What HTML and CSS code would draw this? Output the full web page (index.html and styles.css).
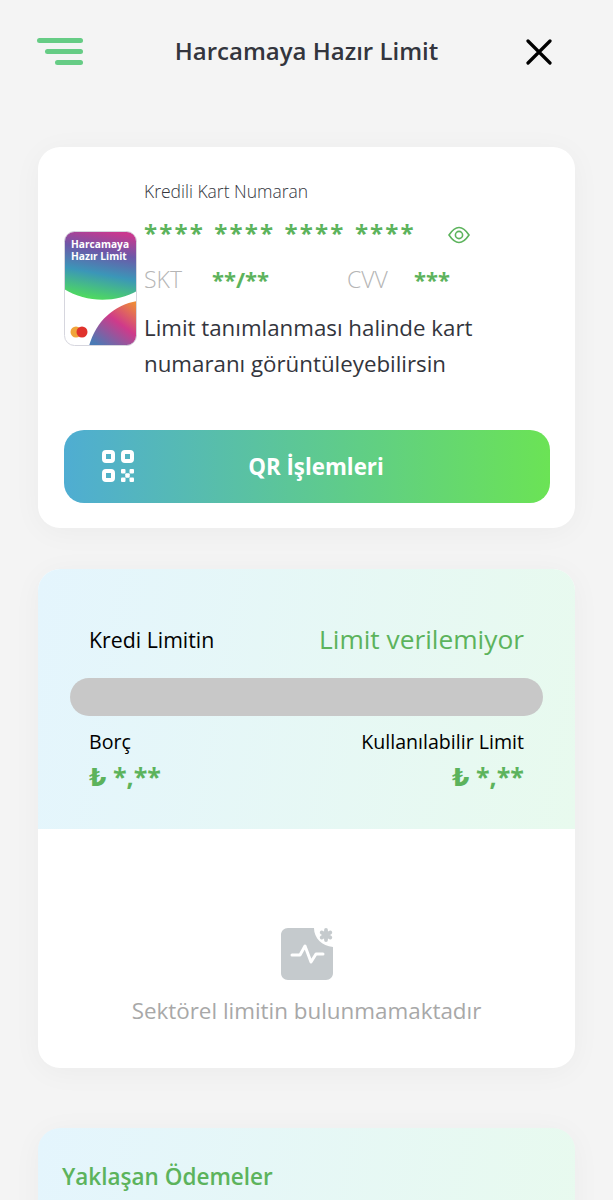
FILE: index.html
```html
<!DOCTYPE html>
<html lang="tr">

<head>
    <meta charset="UTF-8">
    <meta name="viewport" content="width=device-width, initial-scale=1.0">
    <title>Harcamaya Hazır Limit</title>
    <link rel="stylesheet" href="styles.css">
</head>

<body>
    <div class="page">

        <!-- Top bar -->
        <header class="top-bar">
            <svg class="menu-icon" width="46" height="27" viewBox="0 0 46 27">
                <rect x="0" y="0" width="46" height="5" rx="2.5" fill="#66cc85" />
                <rect x="8" y="11" width="38" height="5" rx="2.5" fill="#66cc85" />
                <rect x="18" y="22" width="28" height="5" rx="2.5" fill="#66cc85" />
            </svg>
            <h1 class="top-title">Harcamaya Hazır Limit</h1>
            <svg class="close-icon" width="26" height="26" viewBox="0 0 26 26">
                <path d="M2 2 L24 24 M24 2 L2 24" stroke="#000" stroke-width="3.2" stroke-linecap="round" fill="none" />
            </svg>
        </header>

        <!-- Card info -->
        <section class="card card-info">
            <div class="info-row">
                <svg class="card-thumb" width="73" height="115" viewBox="0 0 73 115">
                    <defs>
                        <clipPath id="thumb-clip">
                            <rect x="0.5" y="0.5" width="72" height="114" rx="10" />
                        </clipPath>
                        <linearGradient id="thumb-top" x1="0.6" y1="0" x2="0.4" y2="1">
                            <stop offset="0" stop-color="#c9388f" />
                            <stop offset="0.3" stop-color="#6c58a8" />
                            <stop offset="0.62" stop-color="#3b96b8" />
                            <stop offset="1" stop-color="#4fdc5c" />
                        </linearGradient>
                        <linearGradient id="thumb-bottom" x1="0.95" y1="0.05" x2="0.2" y2="1">
                            <stop offset="0" stop-color="#ee8b38" />
                            <stop offset="0.45" stop-color="#cf3a8a" />
                            <stop offset="1" stop-color="#4a7ab5" />
                        </linearGradient>
                    </defs>
                    <g clip-path="url(#thumb-clip)">
                        <rect width="73" height="115" fill="#fff" />
                        <path d="M0 0 H73 V60 C52 72 22 72 0 58 Z" fill="url(#thumb-top)" />
                        <path d="M73 70 V115 H25 C32 90 50 74 73 70 Z" fill="url(#thumb-bottom)" />
                        <circle cx="12" cy="101" r="5.5" fill="#f0a53a" />
                        <circle cx="18" cy="101" r="5.5" fill="#e0322c" />
                        <text class="thumb-text" x="7" y="17">Harcamaya</text>
                        <text class="thumb-text" x="7" y="29">Hazır Limit</text>
                    </g>
                    <rect x="0.5" y="0.5" width="72" height="114" rx="10" fill="none" stroke="#d6d6de" />
                </svg>

                <div class="info-text">
                    <div class="number-label">Kredili Kart Numaran</div>
                    <div class="number-row">
                        <span class="stars number-stars">**** **** **** ****</span>
                        <svg class="eye-icon" width="22" height="18" viewBox="0 0 22 18">
                            <path d="M1 9 C5 3 8 1.5 11 1.5 C14 1.5 17 3 21 9 C17 15 14 16.5 11 16.5 C8 16.5 5 15 1 9 Z" stroke="#5cb35c" stroke-width="1.6" fill="none" />
                            <circle cx="11" cy="9" r="3.6" stroke="#5cb35c" stroke-width="1.6" fill="none" />
                        </svg>
                    </div>
                    <div class="secure-row">
                        <span class="secure-label skt-label">SKT</span>
                        <span class="stars secure-stars skt-value">**/**</span>
                        <span class="secure-label cvv-label">CVV</span>
                        <span class="stars secure-stars">***</span>
                    </div>
                    <p class="info-note">Limit tanımlanması halinde kart numaranı görüntüleyebilirsin</p>
                </div>
            </div>

            <button class="qr-button">
                <svg class="qr-icon" width="33" height="33" viewBox="0 0 33 33">
                    <rect x="2" y="2" width="9" height="9" rx="2" fill="none" stroke="#fff" stroke-width="4" />
                    <rect x="21" y="2" width="9" height="9" rx="2" fill="none" stroke="#fff" stroke-width="4" />
                    <rect x="2" y="21" width="9" height="9" rx="2" fill="none" stroke="#fff" stroke-width="4" />
                    <rect x="19" y="19" width="4.500" height="4.500" rx="1" fill="#fff" />
                    <rect x="27.500" y="19" width="4.500" height="4.500" rx="1" fill="#fff" />
                    <rect x="23.250" y="23.250" width="4.500" height="4.500" rx="1" fill="#fff" />
                    <rect x="19" y="27.500" width="4.500" height="4.500" rx="1" fill="#fff" />
                    <rect x="27.500" y="27.500" width="4.500" height="4.500" rx="1" fill="#fff" />
                </svg>
                <span>QR İşlemleri</span>
            </button>
        </section>

        <!-- Limit card -->
        <section class="card card-limit">
            <div class="limit-top">
                <div class="limit-head">
                    <span class="limit-label">Kredi Limitin</span>
                    <span class="limit-status">Limit verilemiyor</span>
                </div>
                <div class="limit-bar"></div>
                <div class="limit-values">
                    <div>
                        <div class="value-label">Borç</div>
                        <div class="stars value-amount">₺ *,**</div>
                    </div>
                    <div class="value-right">
                        <div class="value-label">Kullanılabilir Limit</div>
                        <div class="stars value-amount">₺ *,**</div>
                    </div>
                </div>
            </div>
            <div class="limit-empty">
                <svg class="sector-icon" width="54" height="54" viewBox="0 0 54 54">
                    <path d="M8 1 H34 C34 11 42 19 53 20 V46 C53 50 50 53 46 53 H8 C4 53 1 50 1 46 V8 C1 4 4 1 8 1 Z" fill="#c5cacd" />
                    <path d="M12 28 H20 L25 19 L31 35 L36 27 H43" stroke="#fff" stroke-width="3" stroke-linecap="round" stroke-linejoin="round" fill="none" />
                    <path d="M46 3 V13 M41.700 5.500 L50.300 10.500 M50.300 5.500 L41.700 10.500" stroke="#c5cacd" stroke-width="3.800" stroke-linecap="round" fill="none" />
                </svg>
                <p class="empty-text">Sektörel limitin bulunmamaktadır</p>
            </div>
        </section>

        <!-- Upcoming payments -->
        <section class="card card-upcoming">
            <h2 class="upcoming-title">Yaklaşan Ödemeler</h2>
        </section>

    </div>
</body>

</html>
```

FILE: styles.css
```css
/* General body styling */
html,
body {
    margin: 0;
    padding: 0;
    background-color: #f4f4f4;
    font-family: "Open Sans", "DejaVu Sans", sans-serif;
}

.page {
    height: 1200px;
    overflow: hidden;
}

/* Top bar */
.top-bar {
    display: flex;
    align-items: center;
    justify-content: space-between;
    padding: 38px 61px 0 37px;
    height: 27px;
    margin-bottom: 82px;
}

.top-title {
    margin: -2px 0 0;
    font-size: 24px;
    font-weight: 600;
    color: #33353d;
    position: relative;
    left: 2px;
}

/* Cards */
.card {
    margin: 0 38px;
    background-color: #fff;
    border-radius: 22px;
    box-shadow: 0 4px 30px rgba(0, 0, 0, 0.04);
}

.card-info {
    box-sizing: border-box;
    height: 381px;
    padding: 32px 25px 0 26px;
    margin-bottom: 41px;
}

.info-row {
    display: flex;
    align-items: flex-start;
    gap: 7px;
}

.card-thumb {
    flex-shrink: 0;
    margin-top: 52px;
}

.info-text {
    flex: 1;
    min-width: 0;
}

.number-label {
    font-size: 17.500px;
    font-weight: 300;
    line-height: 24px;
    color: #33353d;
}

.stars {
    font-weight: 700;
    color: #5cb35c;
}

.number-row {
    display: flex;
    align-items: center;
    height: 36px;
    margin-top: 11px;
}

.number-stars {
    font-size: 24px;
    letter-spacing: 2.15px;
    word-spacing: 1px;
    white-space: nowrap;
}

.eye-icon {
    margin-left: 32px;
    position: relative;
    top: 3px;
}

.secure-row {
    display: flex;
    align-items: baseline;
    height: 36px;
    margin-top: 13px;
}

.secure-label {
    font-size: 23px;
    font-weight: 300;
    color: #b5b5b5;
}

.secure-stars {
    font-size: 22px;
}

.skt-label {
    width: 68px;
}

.skt-value {
    width: 135px;
}

.cvv-label {
    width: 67px;
}

.info-note {
    margin: 11px 0 0;
    font-size: 22.300px;
    line-height: 36px;
    color: #33353d;
}

/* QR button */
.qr-button {
    display: flex;
    align-items: center;
    justify-content: center;
    position: relative;
    width: 486px;
    height: 73px;
    margin-top: 48px;
    border: none;
    border-radius: 20px;
    background: linear-gradient(90deg, #4fadd2, #6be355);
    color: #fff;
    font-family: inherit;
    font-size: 22.300px;
    font-weight: 700;
}

.qr-icon {
    position: absolute;
    left: 38px;
    top: 20px;
}

.qr-button span {
    position: relative;
    left: 9px;
}

/* Limit card */
.card-limit {
    height: 499px;
    margin-bottom: 60px;
    overflow: hidden;
}

.limit-top {
    box-sizing: border-box;
    height: 260px;
    padding: 49px 32px 0;
    background: linear-gradient(100deg, #e4f5fd, #e8faee);
}

.limit-head {
    display: flex;
    align-items: center;
    justify-content: space-between;
    height: 42px;
    padding: 0 19px;
}

.limit-label {
    font-size: 21.300px;
    color: #000;
}

.limit-status {
    font-size: 26.300px;
    color: #5cb35c;
}

.limit-bar {
    height: 38px;
    margin-top: 18px;
    border-radius: 19px;
    background-color: #c8c8c8;
}

.limit-values {
    display: flex;
    justify-content: space-between;
    padding: 12px 19px 0;
}

.value-right {
    text-align: right;
}

.value-label {
    font-size: 19.600px;
    line-height: 28px;
    color: #000;
}

.value-amount {
    font-size: 25px;
    line-height: 38px;
    margin-top: 1px;
}

.limit-empty {
    display: flex;
    flex-direction: column;
    align-items: center;
    padding-top: 98px;
}

.sector-icon {
    display: block;
}

.empty-text {
    margin: 14px 0 0;
    font-size: 22.400px;
    line-height: 32px;
    color: #a8a8a8;
}

/* Upcoming payments */
.card-upcoming {
    height: 200px;
    padding: 31px 24px 0;
    background: linear-gradient(100deg, #e4f5fd, #e8faee);
}

.upcoming-title {
    margin: 0;
    font-size: 22.500px;
    font-weight: 600;
    line-height: 36px;
    color: #5cb35c;
}

.thumb-text {
    font-family: "Open Sans", sans-serif;
    font-size: 10.200px;
    font-weight: 700;
    fill: #fff;
}
```
